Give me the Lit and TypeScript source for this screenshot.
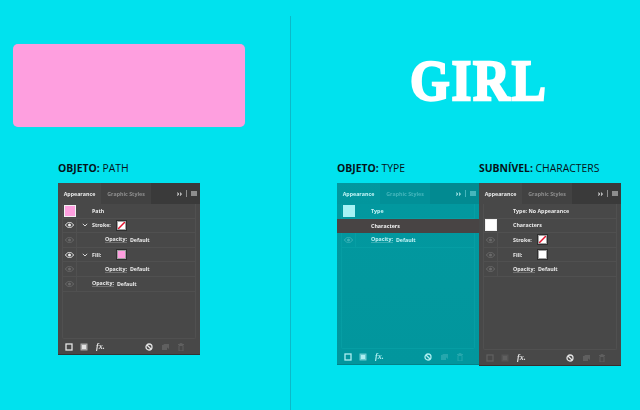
import { LitElement, html, css, svg, nothing } from "lit";
import { customElement, property } from "lit/decorators.js";

type Row = {
  eye?: "on" | "dim";
  big?: string;
  chevron?: boolean;
  indent?: boolean;
  label: string;
  value?: string;
  swatch?: "stroke" | "fill-pink" | "fill-white";
  selected?: boolean;
  link?: boolean;
};

const eye = svg`<svg width="9" height="6" viewBox="0 0 9 6"><path d="M.4 3C1.6 1.2 3 .4 4.5.4S7.4 1.2 8.6 3C7.4 4.8 6 5.6 4.5 5.6S1.6 4.8.4 3Z" fill="none" stroke="currentColor" stroke-width=".9"/><circle cx="4.5" cy="3" r="1.5" fill="currentColor"/></svg>`;
const chevron = svg`<svg width="6" height="4" viewBox="0 0 6 4"><path d="M.8.8 3 3 5.2.8" fill="none" stroke="currentColor" stroke-width="1"/></svg>`;

@customElement("appearance-panel")
class AppearancePanel extends LitElement {
  @property({ attribute: false }) rows: Row[] = [];
  @property({ reflect: true }) tone = "dark";

  static styles = css`
    :host {
      display: flex;
      flex-direction: column;
      width: 142px;
      height: 172px;
      font: 700 5.3px "Open Sans", sans-serif;
      filter: blur(0.25px);
      --body: #484848;
      --head: #3a3a3a;
      --tab: #424242;
      --line: #505050;
      --text: #ececec;
      --muted: #8e8e8e;
      --eye: #f0f0f0;
      --eye-dim: #6c6c6c;
      --icon: #e4e4e4;
      --icon-dim: #5f5f5f;
      --edge: #333;
      --swatch-edge: #a0a0a0;
    }
    :host([tone="teal"]) {
      --body: linear-gradient(#02989f, #02969d);
      --head: #028a91;
      --tab: #029098;
      --line: #069ea4;
      --text: #c4f5f7;
      --muted: #45b6bc;
      --eye-dim: #3fb3b9;
      --icon: #aeeef1;
      --icon-dim: #25a7ad;
      --edge: #028289;
      height: 182px;
    }
    :host([tone="tall"]) { height: 183px; --edge: #3a2c2c; }
    .tabs { display: flex; align-items: stretch; height: 21px; background: var(--head); flex: none; }
    .tab { display: flex; align-items: center; justify-content: center; color: var(--text); background: var(--body); width: 43px; }
    .tab.off { background: var(--tab); color: var(--muted); width: 50px; }
    .tools { margin-left: auto; display: flex; align-items: center; gap: 4px; padding-right: 3px; color: var(--text); font-size: 7px; }
    .menu { width: 6px; height: 5px; background: var(--muted); }
    .sep { width: 1px; height: 7px; background: var(--muted); }
    .body { flex: 1; background: var(--body); display: flex; flex-direction: column; min-height: 0; }
    .list { flex: 1; margin: 0 4px; border: 1px solid var(--line); border-width: 0 1px 1px; border-radius: 0 0 2px 2px; display: flex; flex-direction: column; }
    .row { display: flex; align-items: center; height: 14.6px; flex: none; border-bottom: 1px solid var(--line); box-sizing: border-box; color: var(--text); }
    .row.selected { background: #484444; margin: 0 -5px; padding: 0 5px; border-bottom: 0; color: #f2f2f2; }
    .lead { width: 14px; height: 100%; flex: none; display: flex; align-items: center; justify-content: center; box-sizing: border-box; }
    .lead.on { color: var(--eye); border-right: 1px solid var(--line); }
    .lead.dim { color: var(--eye-dim); border-right: 1px solid var(--line); }
    .big { width: 10px; height: 10px; border: 1px solid #f0f0f0; flex: none; margin-right: 1px; }
    :host([tone="teal"]) .big { border-color: #a6f3f5; }
    .big.pink { background: #fe9fdf; }
    .big.aqua { background: #a6f3f5; }
    .big.white { background: #fff; }
    .gap { width: 15px; flex: none; display: flex; justify-content: flex-end; padding-right: 4px; box-sizing: border-box; color: #d8d8d8; }
    .indent { width: 13px; flex: none; }
    .label { white-space: nowrap; }
    .label.link { border-bottom: 1px solid rgba(255,255,255,.22); line-height: 6px; }
    .label.wide { min-width: 25px; border-bottom: 0; }
    .value { margin-left: 3px; white-space: nowrap; }
    .swatch { width: 7px; height: 7px; border: 1.5px solid var(--swatch-edge); outline: 1px solid #2f2f2f; flex: none; background: #fff; }
    .swatch.fill-pink { background: #fe9fdf; }
    .swatch svg { display: block; }
    .foot { height: 15px; flex: none; display: flex; align-items: center; padding-left: 7px; color: var(--icon); }
    .foot svg { display: block; flex: none; }
    .fx { font: italic 700 8px "Liberation Serif", serif; width: 15px; margin-left: 8px; color: var(--icon); }
    .spacer { width: 34px; flex: none; }
    .dim-icon { color: var(--icon-dim); margin-left: 8px; }
    .second { margin-left: 7px; }
    :host([tone="tall"]) .first { color: var(--icon-dim); }
    .edge { height: 1px; background: var(--edge); flex: none; }
  `;

  private renderRow(r: Row) {
    return html`<div class="row ${r.selected ? "selected" : ""}">
      <div class="lead ${r.eye ?? ""}">
        ${r.eye ? eye : r.big ? html`<div class="big ${r.big}"></div>` : nothing}
      </div>
      <div class="gap">${r.chevron ? chevron : nothing}</div>
      ${r.indent ? html`<div class="indent"></div>` : nothing}
      <span class="label ${r.link ? "link" : ""} ${r.swatch ? "wide" : ""}">${r.label}</span>
      ${r.value ? html`<span class="value">${r.value}</span>` : nothing}
      ${r.swatch
        ? html`<div class="swatch ${r.swatch}">
            ${r.swatch === "stroke"
              ? svg`<svg width="7" height="7" viewBox="0 0 7 7"><path d="M0 7 7 0" stroke="#e3122d" stroke-width="1.5"/></svg>`
              : nothing}
          </div>`
        : nothing}
    </div>`;
  }

  render() {
    return html`
      <div class="tabs">
        <div class="tab">Appearance</div>
        <div class="tab off">Graphic Styles</div>
        <div class="tools"><span>››</span><div class="sep"></div><div class="menu"></div></div>
      </div>
      <div class="body">
        <div class="list">${this.rows.map((r) => this.renderRow(r))}</div>
        <div class="foot">
          <svg class="first" width="8" height="8" viewBox="0 0 8 8"><rect x="1" y="1" width="6" height="6" fill="none" stroke="currentColor" stroke-width="1.3"/></svg>
          <svg class="first second" width="8" height="8" viewBox="0 0 8 8"><rect x=".5" y=".5" width="7" height="7" fill="currentColor" fill-opacity=".6"/><rect x="2" y="2" width="4" height="4" fill="currentColor"/></svg>
          <span class="fx">fx.</span>
          <div class="spacer"></div>
          <svg width="8" height="8" viewBox="0 0 8 8"><circle cx="4" cy="4" r="3" fill="none" stroke="currentColor" stroke-width="1.3"/><path d="M2 2 6 6" stroke="currentColor" stroke-width="1.2"/></svg>
          <svg class="dim-icon" width="8" height="8" viewBox="0 0 8 8"><path d="M1 2h5v5H1Z M2 1h6v5" fill="currentColor"/></svg>
          <svg class="dim-icon" width="8" height="8" viewBox="0 0 8 8"><path d="M1 1.5h6M3 1V.4h2V1M2 2.5h4V8H2Z" fill="none" stroke="currentColor"/></svg>
        </div>
        <div class="edge"></div>
      </div>
    `;
  }
}

const pathRows: Row[] = [
  { big: "pink", label: "Path" },
  { eye: "on", chevron: true, label: "Stroke:", link: true, swatch: "stroke" },
  { eye: "dim", indent: true, label: "Opacity:", link: true, value: "Default" },
  { eye: "on", chevron: true, label: "Fill:", link: true, swatch: "fill-pink" },
  { eye: "dim", indent: true, label: "Opacity:", link: true, value: "Default" },
  { eye: "dim", label: "Opacity:", link: true, value: "Default" },
];
const typeRows: Row[] = [
  { big: "aqua", label: "Type" },
  { label: "Characters", selected: true },
  { eye: "dim", label: "Opacity:", link: true, value: "Default" },
];
const charRows: Row[] = [
  { label: "Type: No Appearance" },
  { big: "white", label: "Characters" },
  { eye: "dim", label: "Stroke:", link: true, swatch: "stroke" },
  { eye: "dim", label: "Fill:", link: true, swatch: "fill-white" },
  { eye: "dim", label: "Opacity:", link: true, value: "Default" },
];

@customElement("app-root")
export class AppRoot extends LitElement {
  static styles = css`
    :host {
      display: grid;
      grid-template-columns: 290px 1px 349px;
      width: 640px;
      height: 410px;
      background: #00e2ee;
      overflow: hidden;
      font-family: "Open Sans", sans-serif;
    }
    .left { display: flex; flex-direction: column; padding: 44px 0 0 13px; }
    .shape { width: 232px; height: 83px; background: #fe9fdf; border-radius: 5px; box-shadow: 0 0 1px #6fb8dc; }
    .group { display: flex; flex-direction: column; width: 142px; }
    .left .group { margin: 33px 0 0 45px; }
    .divider { background: #0cb9c8; margin-top: 16px; }
    .right { display: flex; flex-direction: column; padding-left: 46px; }
    .title {
      height: 160px;
      box-sizing: border-box;
      padding: 52px 0 0 73px;
      font: 700 58px/1 "Liberation Serif", serif;
    }
    .title span {
      display: inline-block;
      color: #fff;
      letter-spacing: 2px;
      -webkit-text-stroke: 2.4px #fff;
      white-space: nowrap;
      transform: scaleX(0.88);
      transform-origin: left center;
    }
    .stage { display: flex; }
    .caption { font-size: 10.4px; line-height: 16px; height: 23px; color: #06141a; white-space: nowrap; }
    .caption b { font-weight: 700; }
  `;

  render() {
    return html`
      <div class="left">
        <div class="shape"></div>
        <div class="group">
          <div class="caption"><b>OBJETO:</b> PATH</div>
          <appearance-panel .rows=${pathRows}></appearance-panel>
        </div>
      </div>
      <div class="divider"></div>
      <div class="right">
        <div class="title"><span>GIRL</span></div>
        <div class="stage">
          <div class="group">
            <div class="caption"><b>OBJETO:</b> TYPE</div>
            <appearance-panel tone="teal" .rows=${typeRows}></appearance-panel>
          </div>
          <div class="group">
            <div class="caption"><b>SUBNÍVEL:</b> CHARACTERS</div>
            <appearance-panel tone="tall" .rows=${charRows}></appearance-panel>
          </div>
        </div>
      </div>
    `;
  }
}
void AppearancePanel;
